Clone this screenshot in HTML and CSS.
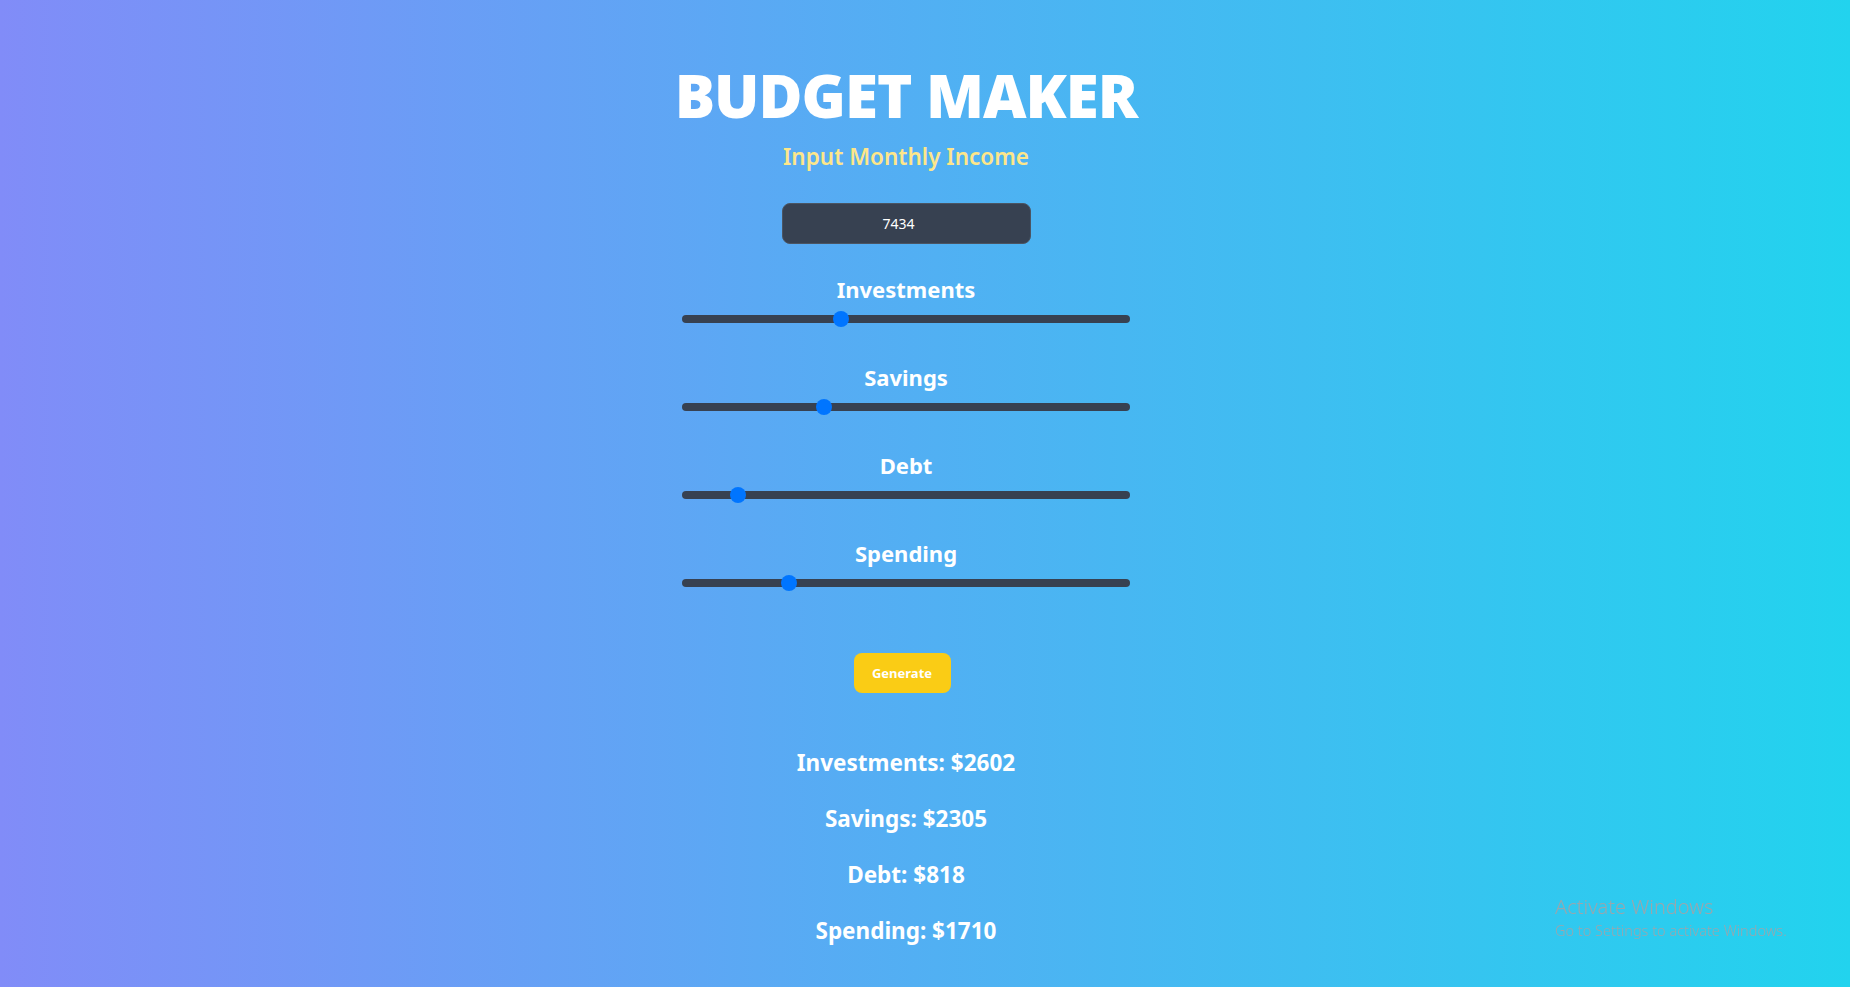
FILE: index.html
```html
<!DOCTYPE html>
<html lang="en">
<head>
<meta charset="utf-8">
<title>Budget Maker</title>
<link rel="stylesheet" href="styles.css">
</head>
<body>
<main class="page">
  <header class="header">
    <h1 class="title">BUDGET MAKER</h1>
    <p class="subtitle">Input Monthly Income</p>
  </header>
  <input class="income" type="number" value="7434">
  <section class="sliders">
    <div class="group">
      <label class="label">Investments</label>
      <input class="range" type="range" min="0" max="100" value="35">
    </div>
    <div class="group">
      <label class="label">Savings</label>
      <input class="range" type="range" min="0" max="100" value="31">
    </div>
    <div class="group">
      <label class="label">Debt</label>
      <input class="range" type="range" min="0" max="100" value="11">
    </div>
    <div class="group">
      <label class="label">Spending</label>
      <input class="range" type="range" min="0" max="100" value="23">
    </div>
  </section>
  <button class="generate">Generate</button>
  <section class="results">
    <p class="result">Investments: $2602</p>
    <p class="result">Savings: $2305</p>
    <p class="result">Debt: $818</p>
    <p class="result">Spending: $1710</p>
  </section>
</main>
<div class="activate">
  <div class="activate-title">Activate Windows</div>
  <div class="activate-sub">Go to Settings to activate Windows.</div>
</div>
</body>
</html>
```

FILE: styles.css
```css
* { box-sizing: border-box; }

html, body { margin: 0; padding: 0; }

body {
  min-height: 100vh;
  background: linear-gradient(to right, #818cf8, #22d3ee);
  font-family: "Noto Sans", "Open Sans", sans-serif;
  color: #ffffff;
  overflow: hidden;
}

.page {
  display: flex;
  flex-direction: column;
  align-items: center;
  padding: 65px 38px 0 0;
}

.header {
  display: flex;
  flex-direction: column;
  align-items: center;
}

.title {
  margin: 0;
  font-size: 60px;
  line-height: 60px;
  font-weight: 900;
  letter-spacing: -1px;
}

.subtitle {
  margin: 16px 0 0;
  font-size: 22.5px;
  line-height: 32px;
  font-weight: 600;
  color: #fde68a;
}

.income {
  margin-top: 30px;
  width: 249px;
  height: 41px;
  background: #374151;
  border: 1px solid #4b5563;
  border-radius: 8px;
  color: #ffffff;
  font-family: inherit;
  font-size: 14px;
  text-align: center;
  outline: none;
}

.sliders {
  display: flex;
  flex-direction: column;
  align-items: center;
  margin-top: 31px;
  gap: 40px;
}

.group {
  display: flex;
  flex-direction: column;
  align-items: center;
}

.label {
  font-size: 22px;
  line-height: 28px;
  font-weight: 700;
}

.range {
  -webkit-appearance: none;
  appearance: none;
  margin: 12px 0 0;
  width: 448px;
  height: 8px;
  background: #374151;
  border-radius: 8px;
  outline: none;
}

.range::-webkit-slider-thumb {
  -webkit-appearance: none;
  appearance: none;
  width: 16px;
  height: 16px;
  border-radius: 50%;
  background: #0075ff;
  border: none;
}

.generate {
  margin: 66px 8px 0 0;
  width: 97px;
  height: 40px;
  background: #facc15;
  border: none;
  border-radius: 8px;
  color: #ffffff;
  font-family: inherit;
  font-size: 13px;
  font-weight: 700;
}

.results {
  display: flex;
  flex-direction: column;
  align-items: center;
  margin-top: 54px;
  gap: 24px;
}

.result {
  margin: 0;
  font-size: 22.5px;
  line-height: 32px;
  font-weight: 700;
}

.activate {
  position: fixed;
  left: 1555px;
  top: 894px;
  color: #9aa6ad;
  font-family: "Noto Sans", "Open Sans", sans-serif;
  font-weight: 300;
}

.activate-title {
  font-size: 20px;
  line-height: 26px;
}

.activate-sub {
  font-size: 14.5px;
  line-height: 20px;
}
```
